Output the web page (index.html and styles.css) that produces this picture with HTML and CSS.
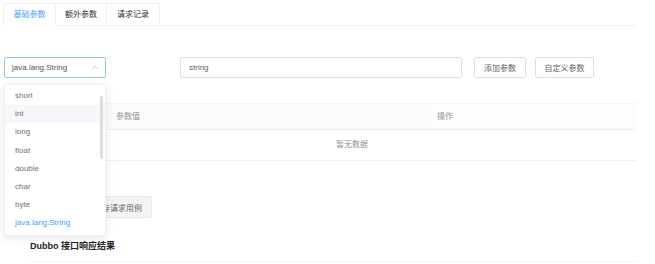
FILE: index.html
```html
<!DOCTYPE html>
<html lang="zh-CN">
<head>
    <meta charset="UTF-8">
    <meta name="viewport" content="width=device-width, initial-scale=1.0">
    <title>Dubbo 接口测试</title>
    <link rel="stylesheet" href="styles.css">
</head>
<body>
    <div class="tabs">
        <div class="tab active">基础参数</div>
        <div class="tab">额外参数</div>
        <div class="tab">请求记录</div>
    </div>

    <div class="form-row">
        <div class="select">
            <span>java.lang.String</span>
            <svg class="arrow" width="8" height="5" viewBox="0 0 8 5">
                <path d="M1 4.2 L4 1.2 L7 4.2" fill="none" stroke="#c0c4cc" stroke-width="0.9"/>
            </svg>
        </div>
        <input class="input" type="text" value="string">
        <button class="btn">添加参数</button>
        <button class="btn btn-custom">自定义参数</button>
    </div>

    <div class="table">
        <div class="table-head">
            <div class="col col-type">参数类型</div>
            <div class="col col-value">参数值</div>
            <div class="col col-op">操作</div>
        </div>
        <div class="table-empty">暂无数据</div>
    </div>

    <div class="save-row">
        <button class="btn btn-save">保存请求用例</button>
    </div>

    <h3 class="result-title">Dubbo 接口响应结果</h3>
    <div class="result-line"></div>

    <!-- Select dropdown, opened -->
    <ul class="dropdown">
        <li>short</li>
        <li class="hover">int</li>
        <li>long</li>
        <li>float</li>
        <li>double</li>
        <li>char</li>
        <li>byte</li>
        <li class="selected">java.lang.String</li>
        <div class="scrollbar"></div>
    </ul>
</body>
</html>
```

FILE: styles.css
```css
:root {
    --text: #606266;
    --muted: #909399;
    --border: #dcdfe6;
    --border-light: #ebeef5;
    --blue: #409eff;
}

body {
    margin: 0;
    font-family: "Liberation Sans", "Noto Sans CJK SC", sans-serif;
    font-size: 8px;
    color: var(--text);
    background: #ffffff;
    position: relative;
    width: 655px;
    height: 264px;
    overflow: hidden;
}

.tabs {
    display: flex;
    margin: 3px 0 0 3px;
    width: 633px;
    height: 22px;
    border-bottom: 1px solid #eef0f3;
}

.tab {
    height: 22px;
    line-height: 22px;
    text-align: center;
    border: 1px solid #eef0f3;
    border-bottom: none;
    border-left: none;
    color: #303133;
    box-sizing: border-box;
}

.tab:first-child {
    border-left: 1px solid #eef0f3;
    width: 53px;
}

.tab:nth-child(2) {
    width: 51px;
}

.tab:nth-child(3) {
    width: 53px;
}

.tab.active {
    color: var(--blue);
    background: #ffffff;
    height: 23px;
}

.form-row {
    display: flex;
    align-items: center;
    margin: 31px 0 0 4px;
}

.select {
    width: 102px;
    height: 21px;
    box-sizing: border-box;
    border: 1px solid #8cc5ff;
    border-radius: 2px;
    display: flex;
    align-items: center;
    justify-content: space-between;
    padding: 0 6px 0 7px;
    color: #505256;
}

.arrow {
    display: block;
}

.input {
    margin-left: 74px;
    width: 282px;
    height: 21px;
    box-sizing: border-box;
    border: 1px solid var(--border);
    border-radius: 2px;
    padding: 0 8px;
    font-family: inherit;
    font-size: 8px;
    color: var(--text);
    outline: none;
}

.btn {
    height: 21px;
    box-sizing: border-box;
    border: 1px solid var(--border);
    border-radius: 2px;
    background: #ffffff;
    font-family: inherit;
    font-size: 8px;
    color: var(--text);
    padding: 0;
    margin-left: 12px;
    width: 52px;
}

.btn-custom {
    margin-left: 9px;
    width: 59px;
}

.table {
    margin: 25px 0 0 68px;
    width: 568px;
}

.table-head {
    display: flex;
    height: 25px;
    line-height: 25px;
    background: #fbfbfc;
    border-top: 1px solid #f3f4f6;
    border-bottom: 1px solid var(--border-light);
    color: var(--muted);
}

.col-type {
    width: 40px;
}

.col-value {
    width: 315px;
    padding-left: 8px;
}

.col-op {
    flex: 1;
    padding-left: 6px;
    background: #fdfdfd;
}

.table-empty {
    height: 30px;
    line-height: 30px;
    text-align: center;
    color: var(--muted);
    border-bottom: 1px solid var(--border-light);
}

.save-row {
    margin: 35px 0 0 84px;
}

.btn-save {
    margin: 0;
    width: 68px;
    height: 22px;
    background: #f4f4f5;
    border-color: #e9e9eb;
}

.result-title {
    margin: 21px 0 0 30px;
    font-size: 9px;
    font-weight: bold;
    color: #1f1f1f;
}

.result-line {
    margin: 9px 0 0 30px;
    width: 606px;
    border-top: 1px solid #f2f3f5;
}

.dropdown {
    position: absolute;
    left: 4px;
    top: 84px;
    width: 102px;
    box-sizing: border-box;
    margin: 0;
    padding: 2px 0;
    list-style: none;
    background: #ffffff;
    border: 1px solid #f0f1f3;
    border-radius: 3px;
    box-shadow: 0 2px 8px rgba(0, 0, 0, 0.1);
}

.dropdown li {
    height: 18.2px;
    line-height: 18.2px;
    padding: 0 10px;
    color: #6f7176;
}

.dropdown li.hover {
    background: #f5f7fa;
}

.dropdown li.selected {
    color: var(--blue);
}

.scrollbar {
    position: absolute;
    right: 2px;
    top: 11px;
    width: 3px;
    height: 63px;
    border-radius: 2px;
    background: #dddee1;
}
```
